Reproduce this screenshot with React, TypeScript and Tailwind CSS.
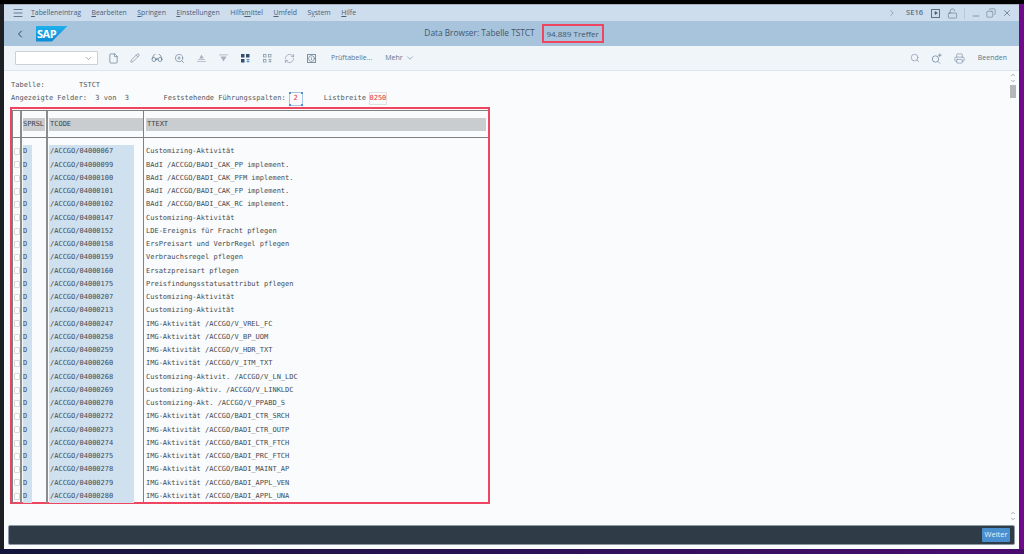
import { ChevronDown, ChevronLeft, ChevronRight, ChevronUp, File, Glasses, Info, LockOpen, Menu, Minus, Pencil, Play, Printer, RefreshCw, Search, Copy, X, ZoomIn } from "lucide-react";

const rows = [
  ["/ACCGO/04000067", "Customizing-Aktivität"],
  ["/ACCGO/04000099", "BAdI /ACCGO/BADI_CAK_PP implement."],
  ["/ACCGO/04000100", "BAdI /ACCGO/BADI_CAK_PFM implement."],
  ["/ACCGO/04000101", "BAdI /ACCGO/BADI_CAK_FP implement."],
  ["/ACCGO/04000102", "BAdI /ACCGO/BADI_CAK_RC implement."],
  ["/ACCGO/04000147", "Customizing-Aktivität"],
  ["/ACCGO/04000152", "LDE-Ereignis für Fracht pflegen"],
  ["/ACCGO/04000158", "ErsPreisart und VerbrRegel pflegen"],
  ["/ACCGO/04000159", "Verbrauchsregel pflegen"],
  ["/ACCGO/04000160", "Ersatzpreisart pflegen"],
  ["/ACCGO/04000175", "Preisfindungsstatusattribut pflegen"],
  ["/ACCGO/04000207", "Customizing-Aktivität"],
  ["/ACCGO/04000213", "Customizing-Aktivität"],
  ["/ACCGO/04000247", "IMG-Aktivität /ACCGO/V_VREL_FC"],
  ["/ACCGO/04000258", "IMG-Aktivität /ACCGO/V_BP_UOM"],
  ["/ACCGO/04000259", "IMG-Aktivität /ACCGO/V_HDR_TXT"],
  ["/ACCGO/04000260", "IMG-Aktivität /ACCGO/V_ITM_TXT"],
  ["/ACCGO/04000268", "Customizing-Aktivit. /ACCGO/V_LN_LDC"],
  ["/ACCGO/04000269", "Customizing-Aktiv. /ACCGO/V_LINKLDC"],
  ["/ACCGO/04000270", "Customizing-Akt. /ACCGO/V_PPABD_S"],
  ["/ACCGO/04000272", "IMG-Aktivität /ACCGO/BADI_CTR_SRCH"],
  ["/ACCGO/04000273", "IMG-Aktivität /ACCGO/BADI_CTR_OUTP"],
  ["/ACCGO/04000274", "IMG-Aktivität /ACCGO/BADI_CTR_FTCH"],
  ["/ACCGO/04000275", "IMG-Aktivität /ACCGO/BADI_PRC_FTCH"],
  ["/ACCGO/04000278", "IMG-Aktivität /ACCGO/BADI_MAINT_AP"],
  ["/ACCGO/04000279", "IMG-Aktivität /ACCGO/BADI_APPL_VEN"],
  ["/ACCGO/04000280", "IMG-Aktivität /ACCGO/BADI_APPL_UNA"],
];

const menus: [string, string, string][] = [
  ["", "T", "abelleneintrag"],
  ["", "B", "earbeiten"],
  ["", "S", "pringen"],
  ["", "E", "instellungen"],
  ["Hilfs", "m", "ittel"],
  ["", "U", "mfeld"],
  ["S", "y", "stem"],
  ["", "H", "ilfe"],
];

function GridIcon({ dark }: { dark?: boolean }) {
  const color = dark ? "#34506c" : "#8b9bab";
  return (
    <svg width="9" height="9" viewBox="0 0 9 9">
      {[[0, 0], [5, 0], [0, 5]].map(([x, y]) =>
        dark ? (
          <rect key={`${x}${y}`} x={x} y={y} width="3.5" height="3.5" fill={color} />
        ) : (
          <rect key={`${x}${y}`} x={x + 0.5} y={y + 0.5} width="2.5" height="2.5" fill="none" stroke={color} strokeWidth="0.8" />
        ),
      )}
      <path d="M5.5 5.5h3M5.5 7.5h3M7 5.5v3" stroke={dark ? "#3a86c4" : color} strokeWidth="0.8" fill="none" />
    </svg>
  );
}

function SortIcon({ down }: { down?: boolean }) {
  return (
    <svg width="9" height="8" viewBox="0 0 9 8" fill="#a5b2bf">
      {down ? (
        <>
          <path d="M0 0.5h9v0.8h-9z" />
          <path d="M1.5 2.5h6L4.5 7.5z" />
        </>
      ) : (
        <>
          <path d="M4.5 0.5l2.2 4H2.3z" />
          <path d="M1 5.3h7v0.8h-7zM0 7h9v0.8h-9z" />
        </>
      )}
    </svg>
  );
}

function SearchPlus() {
  return (
    <svg width="11" height="11" viewBox="0 0 11 11" fill="none" stroke="#7f93a7" strokeWidth="0.9">
      <circle cx="4.5" cy="6" r="3.2" />
      <path d="M7 8.5l2 2M8.8 0.5v3.4M7.1 2.2h3.4" />
    </svg>
  );
}

const lineCols = "grid-cols-[8px_26px_97px_343px]";
const toolCell = "flex w-[22.1px] justify-center";

export default function App() {
  return (
    <div className="flex h-[554px] w-[1024px] flex-col overflow-hidden bg-black font-['Open_Sans',sans-serif]">
      <div className="h-[4px] shrink-0 bg-black" />
      <div className="flex h-[545px] shrink-0">
        <div className="w-[4px] shrink-0 bg-[#1c1f24]" />
        <div className="flex w-[1015px] shrink-0 flex-col bg-[#fafbfc]">
          {/* menu bar */}
          <div className="flex h-[17px] shrink-0 items-center border-t border-[#a9b2bb] bg-[#cddded] text-[6.9px] text-[#4a6078]">
            <Menu className="ml-[8px] h-[12px] w-[12px] text-[#3f5870]" strokeWidth={1.5} />
            <div className="ml-[7px] flex gap-[10.5px]">
              {menus.map(([a, b, c]) => (
                <span key={a + b + c}>
                  {a}
                  <span className="underline">{b}</span>
                  {c}
                </span>
              ))}
            </div>
            <div className="ml-auto flex items-center text-[#5c7288]">
              <ChevronRight className="h-[10px] w-[10px]" strokeWidth={1.3} />
              <span className="ml-[9px] text-[7.5px] font-semibold">SE16</span>
              <span className="ml-[8px] flex h-[9px] w-[9px] items-center justify-center border border-[#5c7288]">
                <Play className="h-[4px] w-[4px] fill-[#3f5870]" />
              </span>
              <LockOpen className="ml-[7px] h-[11px] w-[11px]" strokeWidth={1.3} />
              <div className="ml-[6px] h-[11px] w-px bg-[#b8c8d8]" />
              <Minus className="ml-[6px] h-[10px] w-[10px] translate-y-[3px]" strokeWidth={1.5} />
              <Copy className="ml-[5px] h-[10px] w-[10px] -scale-x-100" strokeWidth={1.3} />
              <X className="ml-[6px] mr-[7px] h-[10px] w-[10px]" strokeWidth={1.8} />
            </div>
          </div>
          {/* title bar */}
          <div className="relative flex h-[25px] shrink-0 items-center justify-center bg-[#a8c4dd] pl-[1px] text-[8.3px] text-[#3f556c]">
            <div className="absolute left-[10px] top-0 flex h-full items-center">
              <ChevronLeft className="h-[12px] w-[12px] text-[#2f465e]" strokeWidth={2} />
              <div className="relative ml-[10px] h-[16px] w-[32px] [clip-path:polygon(0_0,100%_0,50%_100%,0_100%)] bg-gradient-to-b from-[#1fb0ec] to-[#0a8bd6]">
                <span className="absolute left-[1px] top-[0px] text-[11px] font-bold leading-[15px] tracking-[-0.5px] text-white">SAP</span>
              </div>
            </div>
            <span className="ml-[4px]">Data Browser: Tabelle TSTCT</span>
            <span className="ml-[7px] flex h-[19px] w-[62px] items-center justify-center border-2 border-[#ef4560] text-[8px]">94.889 Treffer</span>
          </div>
          {/* toolbar */}
          <div className="flex h-[25px] shrink-0 items-center border-b border-[#dbe5ee] bg-[#f0f5fa] pl-[11px] pr-[12px] text-[7px] text-[#5f7389]">
            <div className="flex h-[14px] w-[83px] items-center justify-end rounded-[1px] border border-[#c9d1d8] bg-white pr-[4px]">
              <ChevronDown className="h-[9px] w-[9px] text-[#7f93a7]" />
            </div>
            <div className="ml-[4px] flex items-center text-[#7f93a7]">
              <span className={toolCell}><File className="h-[11px] w-[11px] text-[#5c7288]" strokeWidth={1.4} /></span>
              <span className={toolCell}><Pencil className="h-[10px] w-[10px]" strokeWidth={1.8} /></span>
              <span className={toolCell}><Glasses className="h-[12px] w-[12px] text-[#5c7288]" strokeWidth={1.4} /></span>
              <span className={toolCell}><ZoomIn className="h-[11px] w-[11px]" strokeWidth={1.7} /></span>
              <span className={toolCell}><SortIcon /></span>
              <span className={toolCell}><SortIcon down /></span>
              <span className={toolCell}><GridIcon dark /></span>
              <span className={toolCell}><GridIcon /></span>
              <span className={toolCell}><RefreshCw className="h-[11px] w-[11px]" strokeWidth={1.4} /></span>
              <span className={toolCell}>
                <span className="flex h-[9px] w-[9px] items-center justify-center border border-[#7f93a7]">
                  <Info className="h-[7px] w-[7px] text-[#4f6880]" strokeWidth={2} />
                </span>
              </span>
            </div>
            <span className="ml-[8px] text-[#5f7389]">Prüftabelle...</span>
            <span className="ml-[13px] flex items-center gap-[2px]">
              Mehr
              <ChevronDown className="h-[10px] w-[10px]" strokeWidth={1.3} />
            </span>
            <div className="ml-auto flex items-center text-[#7f93a7]">
              <Search className="h-[10px] w-[10px]" strokeWidth={1.6} />
              <span className="ml-[11px] flex">
                <SearchPlus />
              </span>
              <Printer className="ml-[12px] h-[11px] w-[11px]" strokeWidth={1.5} />
              <span className="ml-[13px] text-[#5f7389]">Beenden</span>
            </div>
          </div>
          {/* list output */}
          <div className="flex h-[454px] shrink-0 bg-[#fafbfc] font-['DejaVu_Sans_Mono',monospace] text-[7px] text-[#444b52]">
            <div className="w-[1005px] shrink-0 pl-[6px] pt-[8px]">
              <div className="flex h-[13px] items-center pl-[1px] whitespace-pre text-[#50585f]">
                <span className="w-[68px]">Tabelle:</span>
                <span>TSTCT</span>
              </div>
              <div className="flex h-[13px] items-center pl-[1px] whitespace-pre text-[#50585f]">
                <span className="w-[152.5px]">Angezeigte Felder:  3 von  3</span>
                <span>Feststehende Führungsspalten:</span>
                <span className="relative ml-[3px] flex h-[14px] w-[14px] items-center justify-center border border-[#a9c4de] text-[#e0323c]">
                  2
                  <span className="absolute -left-px -top-px h-[2px] w-[2px] bg-[#4f8fc9]" />
                  <span className="absolute -right-px -top-px h-[2px] w-[2px] bg-[#4f8fc9]" />
                  <span className="absolute -bottom-px -left-px h-[2px] w-[2px] bg-[#4f8fc9]" />
                  <span className="absolute -bottom-px -right-px h-[2px] w-[2px] bg-[#4f8fc9]" />
                </span>
                <span className="ml-[21px]">Listbreite</span>
                <span className="ml-[3px] flex h-[13px] w-[18px] items-center justify-center border border-[#e3dfdf] text-[#e0323c]">0250</span>
              </div>
              <div className="mt-[2px] h-[397px] w-[480px] border-2 border-[#ef4560] pt-[1px]">
                {/* header */}
                <div className={`grid h-[28px] border-y border-[#808080] ${lineCols}`}>
                  <div className="border-l border-[#808080]" />
                  <div className="border-l-2 border-[#8c8c8c] pl-[1px] pt-[7px]">
                    <div className="flex h-[13px] w-[22px] items-center bg-[#c9cdd0] whitespace-pre text-[#3d444b]">SPRSL</div>
                  </div>
                  <div className="border-l-2 border-[#8c8c8c] pl-[1px] pt-[7px]">
                    <div className="flex h-[13px] w-[94px] items-center bg-[#c9cdd0] pl-[1px] text-[#3d444b]">TCODE</div>
                  </div>
                  <div className="border-l border-[#808080] pl-[2px] pt-[7px]">
                    <div className="flex h-[13px] w-[340px] items-center bg-[#c9cdd0] pl-[1px] text-[#3d444b]">TTEXT</div>
                  </div>
                </div>
                {/* spacer above first row */}
                <div className={`grid h-[7px] ${lineCols}`}>
                  <div className="border-l border-[#808080]" />
                  <div className="border-l-2 border-[#8c8c8c]" />
                  <div className="border-l-2 border-[#8c8c8c]" />
                  <div className="border-l border-[#808080]" />
                </div>
                {rows.map(([code, text]) => (
                  <div key={code} className={`grid h-[13.25px] ${lineCols}`}>
                    <div className="flex items-center border-l border-[#808080] pl-[1px]">
                      <div className="h-[7px] w-[6px] rounded-[1px] border border-[#d5d9dd] bg-white" />
                    </div>
                    <div className="border-l-2 border-[#8c8c8c] pl-[1px]">
                      <div className="flex h-full w-[9px] items-center bg-[#cfe0ef]">D</div>
                    </div>
                    <div className="border-l-2 border-[#8c8c8c] pl-[1px]">
                      <div className="flex h-full w-[85px] items-center bg-[#cfe0ef] pl-[1px]">{code}</div>
                    </div>
                    <div className="flex items-center border-l border-[#808080] pl-[2px] whitespace-pre">{text}</div>
                  </div>
                ))}
              </div>
            </div>
            {/* scrollbar */}
            <div className="flex w-[8px] shrink-0 flex-col items-center pb-[3px] pt-[1px] text-[#6f7f8f]">
              <ChevronUp className="h-[6px] w-[6px]" strokeWidth={2.5} />
              <ChevronDown className="h-[6px] w-[6px]" strokeWidth={2.5} />
              <div className="mt-[1px] h-[13px] w-[6px] bg-[#b5b8ba]" />
              <div className="mt-auto" />
              <ChevronUp className="h-[6px] w-[6px]" strokeWidth={2.5} />
              <ChevronDown className="h-[6px] w-[6px]" strokeWidth={2.5} />
            </div>
          </div>
          {/* footer */}
          <div className="mx-[4px] flex h-[20px] shrink-0 items-center justify-end rounded-[2px] border border-[#8d99a5] bg-[#2f3b47] pr-[4px]">
            <button className="flex h-[14px] w-[28px] items-center justify-center rounded-[1px] bg-[#4a90d0] text-[7.5px] text-[#e8f1f8]">Weiter</button>
          </div>
        </div>
        <div className="w-[5px] shrink-0 bg-[#6f0a8a]" />
      </div>
      <div className="h-[5px] shrink-0 bg-gradient-to-r from-[#14153a] via-[#2a1055] to-[#4a0a6e]" />
    </div>
  );
}
